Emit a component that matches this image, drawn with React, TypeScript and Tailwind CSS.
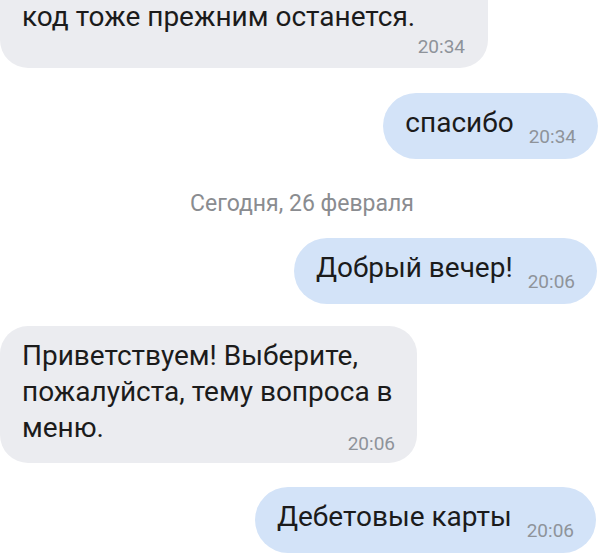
export default function App() {
  return (
    <div
      className="w-[604px] h-[558px] overflow-hidden bg-white text-[#1b1b1b]"
      style={{ fontFamily: 'Roboto, "Noto Sans", sans-serif' }}
    >
      <div className="-mt-[12px] flex flex-col">
        {/* incoming, top cut off by scroll */}
        <div className="flex">
          <div className="w-[488px] bg-[#ebecf0] rounded-b-[28px] pl-[22px] pr-[23px] pt-[10px] pb-[10px]">
            <p className="text-[28px] leading-[38px]">код тоже прежним останется.</p>
            <p className="text-right text-[19px] leading-[22px] text-[#8e939a]">20:34</p>
          </div>
        </div>

        {/* outgoing */}
        <div className="mt-[25px] flex justify-end pr-[6px]">
          <Out text="спасибо" time="20:34" />
        </div>

        <p className="mt-[31px] mb-[20px] text-center text-[23px] leading-[28px] text-[#8a8c90]">
          Сегодня, 26 февраля
        </p>

        <div className="flex justify-end pr-[7px]">
          <Out text="Добрый вечер!" time="20:06" />
        </div>

        <div className="mt-[22px] flex">
          <div className="w-[417px] bg-[#ebecf0] rounded-[28px] pl-[22px] pr-[22px] pt-[12px] pb-[8px] flex flex-col">
            <p className="text-[28px] leading-[36px]">
              Приветствуем! Выберите, пожалуйста, тему вопроса в
            </p>
            <div className="flex items-end justify-between">
              <span className="text-[28px] leading-[36px] mb-[9px]">меню.</span>
              <span className="text-[19px] leading-[22px] text-[#8e939a]">20:06</span>
            </div>
          </div>
        </div>

        <div className="mt-[24px] flex justify-end pr-[8px]">
          <Out text="Дебетовые карты" time="20:06" />
        </div>
      </div>
    </div>
  )
}

function Out({ text, time }: { text: string; time: string }) {
  return (
    <div className="h-[66px] bg-[#d3e3f8] rounded-full pl-[22px] pr-[22px] flex items-end gap-[15px] pb-[11px]">
      <span className="text-[28px] leading-[38px] mb-[6px]">{text}</span>
      <span className="text-[19px] leading-[22px] text-[#8e939a]">{time}</span>
    </div>
  )
}
